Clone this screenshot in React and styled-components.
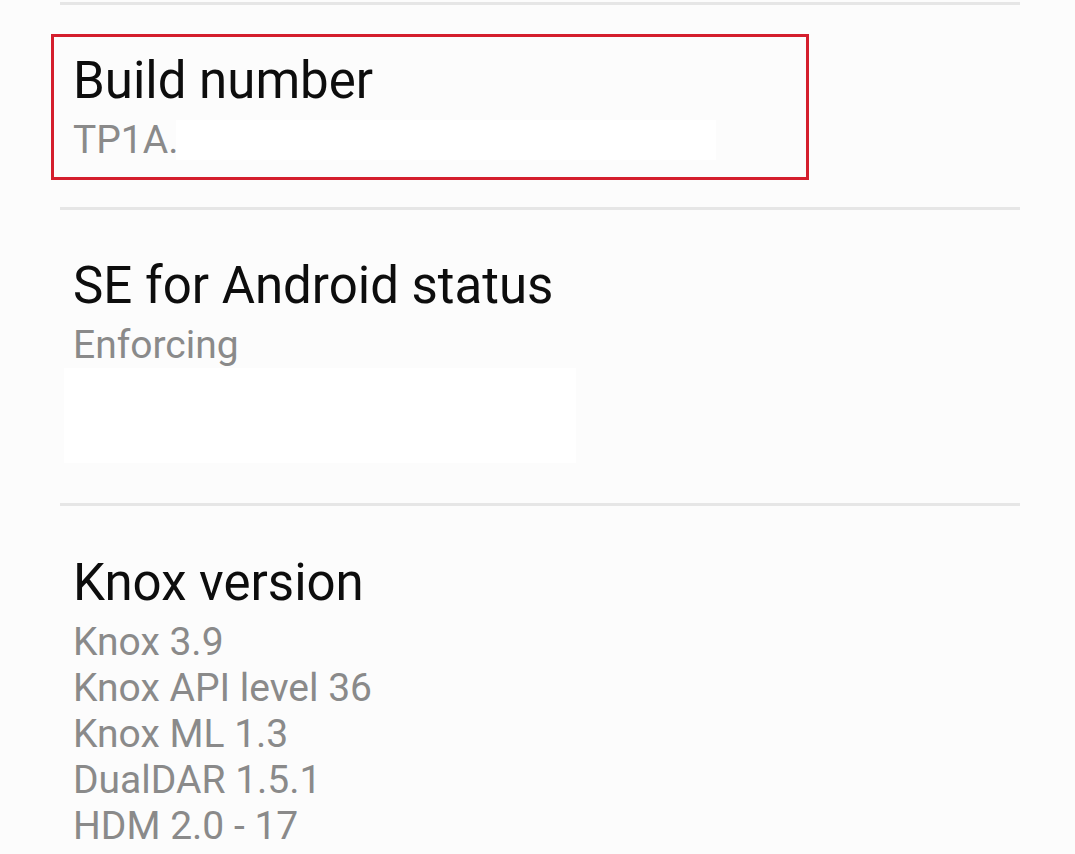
import React from "react";
import styled, { createGlobalStyle } from "styled-components";

const GlobalStyle = createGlobalStyle`
  html, body {
    margin: 0;
    padding: 0;
    background: #fcfcfc;
  }
  body {
    font-family: Roboto, "Noto Sans", "Liberation Sans", sans-serif;
    -webkit-font-smoothing: antialiased;
  }
`;

const Screen = styled.div`
  width: 1075px;
  height: 854px;
  overflow: hidden;
  background: #fcfcfc;
  padding: 0 55px 0 60px;
  box-sizing: border-box;
`;

const Divider = styled.div`
  height: 3px;
  background: #e6e6e6;
  margin-top: ${(p) => p.$top}px;
`;

const Item = styled.div`
  padding: ${(p) => p.$top}px 0 0 13px;
`;

const Highlight = styled.div`
  width: 758px;
  box-sizing: border-box;
  margin: 29px 0 0 -9px;
  border: 3px solid #d41e2d;
  padding: 14px 0 14px 19px;
`;

const Title = styled.div`
  font-size: 51px;
  line-height: 60px;
  color: #0d0d0d;
  white-space: nowrap;
`;

const Summary = styled.div`
  margin-top: 6px;
  font-size: 39px;
  line-height: 46px;
  color: #8a8a8a;
  white-space: nowrap;
`;

const Redacted = styled.span`
  display: inline-block;
  vertical-align: top;
  width: ${(p) => p.$w}px;
  height: ${(p) => p.$h}px;
  margin-top: ${(p) => p.$top || 0}px;
  margin-left: ${(p) => p.$left || 0}px;
  background: #ffffff;
`;

const RedactedBlock = styled.div`
  width: 512px;
  height: 95px;
  margin-left: -9px;
  background: #ffffff;
`;

const knoxLines = [
  "Knox 3.9",
  "Knox API level 36",
  "Knox ML 1.3",
  "DualDAR 1.5.1",
  "HDM 2.0 - 17",
];

export default function App() {
  return (
    <>
      <GlobalStyle />
      <Screen>
        <Divider $top={2} />

        <Highlight>
          <Title>Build number</Title>
          <Summary>
            TP1A.
            <Redacted $w={540} $h={40} $top={3} $left={-3} />
          </Summary>
        </Highlight>

        <Divider $top={27} />

        <Item $top={46}>
          <Title>SE for Android status</Title>
          <Summary>Enforcing</Summary>
          <RedactedBlock />
        </Item>

        <Divider $top={40} />

        <Item $top={47}>
          <Title>Knox version</Title>
          <Summary>
            {knoxLines.map((line) => (
              <div key={line}>{line}</div>
            ))}
          </Summary>
        </Item>
      </Screen>
    </>
  );
}
